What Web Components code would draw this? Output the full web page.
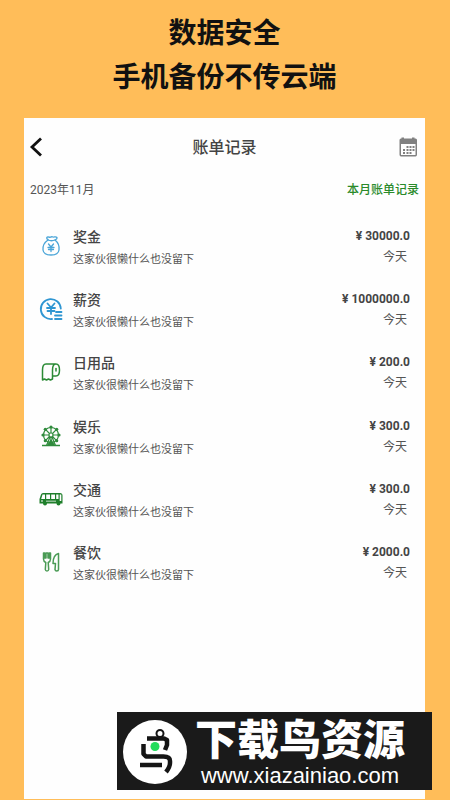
<!DOCTYPE html>
<html lang="zh-CN">
<head>
<meta charset="utf-8">
<meta name="viewport" content="width=device-width, initial-scale=1">
<title>账单记录</title>
<style>
body { margin: 0; font-family: Roboto, "Noto Sans CJK SC", sans-serif; color: #444; }
</style>
</head>
<body>
<promo-page>
  <span slot="headline">数据安全</span>
  <span slot="subline">手机备份不传云端</span>
  <bill-screen heading="账单记录" month="2023年11月" scope="本月账单记录">
    <bill-row icon="bag" amount="30000.0" day="今天">奖金<span slot="note">这家伙很懒什么也没留下</span></bill-row>
    <bill-row icon="salary" amount="1000000.0" day="今天">薪资<span slot="note">这家伙很懒什么也没留下</span></bill-row>
    <bill-row icon="roll" amount="200.0" day="今天">日用品<span slot="note">这家伙很懒什么也没留下</span></bill-row>
    <bill-row icon="wheel" amount="300.0" day="今天">娱乐<span slot="note">这家伙很懒什么也没留下</span></bill-row>
    <bill-row icon="bus" amount="300.0" day="今天">交通<span slot="note">这家伙很懒什么也没留下</span></bill-row>
    <bill-row icon="food" amount="2000.0" day="今天">餐饮<span slot="note">这家伙很懒什么也没留下</span></bill-row>
  </bill-screen>
  <site-badge slot="badge" href="#">下载鸟资源<span slot="url">www.xiazainiao.com</span></site-badge>
</promo-page>
<script>
const ICONS = {
  bag: `<g fill="none" stroke="#4aa5d8" stroke-width="1.3" stroke-linejoin="round" stroke-linecap="round">
    <path d="M9 5.500C7 5 7.500 2.500 9.500 3C11 4 12 2 14 3C15.500 3.500 16.500 2 18 3.500C18.500 5 17 5.500 16 6C18.500 8 20.500 12 20 16C19.500 20 17 21 12 21C7 21 4.500 20 4 16C3.500 11 6 8 9 6Z"/>
    <path d="M9 6Q12.500 7.500 16 6"/><path d="M9.500 10L12 13L14.500 10M12 13V17.500M9 13.500H15M9.500 15.500H14.500"/></g>`,
  salary: `<g fill="none" stroke="#2f96d2" stroke-width="1.800" stroke-linecap="round">
    <path d="M13 22A10 10 0 1 1 21.800 11.500"/><path d="M8.500 6.500L12 10.500L15.500 6.500M12 10.500V17M8 11H16M8.500 14H15.500"/>
    <path d="M17 15H22.500M16 18.500H22.500M16 22H22.500" stroke-width="1.800"/></g>`,
  roll: `<g fill="none" stroke="#2a8a35" stroke-width="1.500" stroke-linejoin="round" stroke-linecap="round">
    <path d="M17 4H7C4.500 4 3.500 6.500 3.500 10V20L5.500 19L7.500 20L9.500 19L11.500 20L13.500 19V10C13.500 6 14.500 4 17 4C19.500 4 20.500 7 20.500 10C20.500 13.500 19 16 17 16H13.500"/>
    <path d="M17 8.500V11"/></g>`,
  wheel: `<g fill="none" stroke="#2f8b3c" stroke-width="1.200">
    <circle cx="12" cy="11" r="7.500"/><circle cx="12" cy="11" r="2"/>
    <path d="M12 3.500V9M12 13V18M4.500 11H10M14 11H19.500M6.700 5.700L10.500 9.500M17.300 5.700L13.500 9.500M6.700 16.300L10.500 12.500M17.300 16.300L13.500 12.500M11 13L7.500 21.500M13 13L16.500 21.500"/>
    <path d="M3 21.500H21" stroke-width="1.500"/></g>
    <g fill="#2f8b3c"><circle cx="12" cy="3" r="1.600"/><circle cx="6.300" cy="5.300" r="1.600"/><circle cx="17.700" cy="5.300" r="1.600"/><circle cx="4" cy="11" r="1.600"/><circle cx="20" cy="11" r="1.600"/><circle cx="6.300" cy="16.700" r="1.600"/><circle cx="17.700" cy="16.700" r="1.600"/><path d="M12 15L16 21H8Z"/></g>`,
  bus: `<path fill="#1f7f2b" fill-rule="evenodd" d="M4 6H21Q23.500 6 23.500 8.500V16.500H21.500A2 2 0 0 1 17.500 16.500H8A2 2 0 0 1 4 16.500H.500V12L2 7.500Q2.500 6 4 6ZM3.500 7.500L2.200 12H6V7.500ZM7.200 7.500V12H11V7.500ZM12.200 7.500V12H16V7.500ZM17.200 7.500V12H19.500V7.500ZM20.700 7.500V14H22.300V7.500ZM2 13.500V14.500H4V13.500ZM7 13.800V14.500H17V13.800Z"/>`,
  food: `<g fill="none" stroke="#4a9b55" stroke-width="1.500" stroke-linejoin="round">
    <path d="M4.500 3V9Q4.500 11.500 6.800 12.500L6.300 19.500Q6.500 21 8 21Q9.500 21 9.700 19.500L9.200 12.500Q11.500 11.500 11.500 9V3H10.300V8H9V3H7V8H5.700V3Z"/>
    <path d="M19.500 3.500C15.500 4.500 14 8.500 14 13.500H16.500L16 19.500Q16.300 21 17.700 21Q19.500 21 19.500 19.500Z"/></g>`
};
const escapeMap = { "&": "&amp;", "<": "&lt;", '"': "&quot;" };

class BaseElement extends HTMLElement {
  connectedCallback() {
    if (!this.shadowRoot) this.attachShadow({ mode: "open" }).innerHTML = this.render();
  }
  attr(name) { return (this.getAttribute(name) || "").replace(/[&<"]/g, c => escapeMap[c]); }
}

class PromoPage extends BaseElement {
  render() {
    return `<style>
      :host { display: flex; flex-direction: column; position: relative; box-sizing: border-box; min-height: 100vh; padding: 12px 25px 1px 24px; background: #ffbd59; }
      h1 { margin: 0 0 18px; font-size: 28px; line-height: 44px; font-weight: 700; text-align: center; color: #111; }
      h1 slot { display: block; }
      .body { flex: 1; display: flex; flex-direction: column; }
    </style>
    <h1><slot name="headline"></slot><slot name="subline"></slot></h1>
    <div class="body"><slot></slot></div>
    <slot name="badge"></slot>`;
  }
}

class BillScreen extends BaseElement {
  render() {
    return `<style>
      :host { flex: 1; display: flex; flex-direction: column; background: #fefefe; }
      header { display: grid; grid-template-columns: 24px 1fr 24px; align-items: center; height: 60px; padding: 0 5px; }
      h2 { margin: 0; font-size: 16px; line-height: 24px; font-weight: 500; text-align: center; color: #444; }
      button { display: flex; align-items: center; justify-content: center; width: 24px; height: 24px; padding: 0; border: 0; background: none; }
      svg { display: block; }
      .bar { display: flex; justify-content: space-between; padding: 0 6px; margin: 2px 0 14px; font-size: 12px; line-height: 20px; color: #555; }
      a { color: #2a8a2a; font-weight: 500; text-decoration: none; }
      main { display: grid; grid-auto-rows: 1fr; min-height: 380px; }
    </style>
    <header>
      <button type="button" aria-label="返回"><svg width="24" height="24" viewBox="0 0 24 24" fill="none" stroke="#111" stroke-width="2.800"><path d="M12 2.500L3 11L12 19.500"/></svg></button>
      <h2>${this.attr("heading")}</h2>
      <button type="button" aria-label="选择日期"><svg width="24" height="24" viewBox="0 0 24 24"><path fill="#808080" fill-rule="evenodd" d="M5 2.500H5.500V1.500H8V2.500H16V1.500H18.500V2.500H19.500Q21 2.500 21 4V18.500Q21 20.500 19.500 20.500H5Q3.500 20.500 3.500 18.500V4Q3.500 2.500 5 2.500ZM5 8V19H19.500V8Z"/><path fill="#808080" d="M10.500 10h2v2h-2zM13.500 10h2v2h-2zM16.500 10h2v2h-2zM7 13h2v2h-2zM10.500 13h2v2h-2zM13.500 13h2v2h-2zM16.500 13h2v2h-2zM7 16h2v2h-2zM10.500 16h2v2h-2zM13.500 16h2v2h-2z"/></svg></button>
    </header>
    <div class="bar"><span>${this.attr("month")}</span><a href="#">${this.attr("scope")}</a></div>
    <main><slot></slot></main>`;
  }
}

class BillRow extends BaseElement {
  render() {
    return `<style>
      :host { display: grid; grid-template-columns: 24px 1fr auto; column-gap: 10px; align-items: center; box-sizing: border-box; padding: 0 15px; }
      svg { display: block; }
      .info, .sum { padding-top: 4px; }
      .name { font-size: 14px; line-height: 22px; font-weight: 500; color: #444; }
      .note { padding-top: 2px; font-size: 11px; line-height: 20px; color: #555; }
      .sum { text-align: right; }
      .amount { font-size: 12px; line-height: 20px; font-weight: 700; color: #444; }
      .day { padding: 0 3px 2px 0; font-size: 12px; line-height: 22px; color: #555; }
    </style>
    <svg width="24" height="24" viewBox="0 0 24 24" aria-hidden="true">${ICONS[this.getAttribute("icon")] || ""}</svg>
    <div class="info"><div class="name"><slot></slot></div><div class="note"><slot name="note"></slot></div></div>
    <div class="sum"><div class="amount">¥ ${this.attr("amount")}</div><div class="day">${this.attr("day")}</div></div>`;
  }
}

class SiteBadge extends BaseElement {
  render() {
    return `<style>
      :host { position: absolute; right: 18px; bottom: 10px; display: flex; align-items: flex-start; gap: 8px; box-sizing: border-box; height: 78px; padding: 0 27px 0 6px; background: #1a1a1a; color: #fff; }
      svg { display: block; flex: none; margin-top: 8px; }
      .text { display: flex; flex-direction: column; align-items: center; padding-top: 6px; white-space: nowrap; }
      .name { font-size: 42px; line-height: 46px; font-weight: 900; }
      a { font: 22px/24px "Liberation Sans", sans-serif; color: #fff; text-decoration: none; }
    </style>
    <svg width="64" height="64" viewBox="0 0 64 64" aria-hidden="true">
      <circle cx="32" cy="32" r="32" fill="#fff"/>
      <g fill="none" stroke="#151515" stroke-width="4.500" stroke-linejoin="round">
        <circle cx="37" cy="13.500" r="3.500" stroke-width="2"/>
        <path d="M24 18.500H41L44 20V25L42 30"/>
        <path d="M20.500 24V34L23 36.500H40.500Q47 36.500 47 41V43Q47 47 43 52"/>
        <path d="M17 45H39"/>
      </g>
      <circle cx="32" cy="26.500" r="4.500" fill="#22dc5c"/>
    </svg>
    <div class="text"><div class="name"><slot></slot></div><a href="${this.attr("href")}"><slot name="url"></slot></a></div>`;
  }
}

customElements.define("promo-page", PromoPage);
customElements.define("bill-screen", BillScreen);
customElements.define("bill-row", BillRow);
customElements.define("site-badge", SiteBadge);
</script>
</body>
</html>
